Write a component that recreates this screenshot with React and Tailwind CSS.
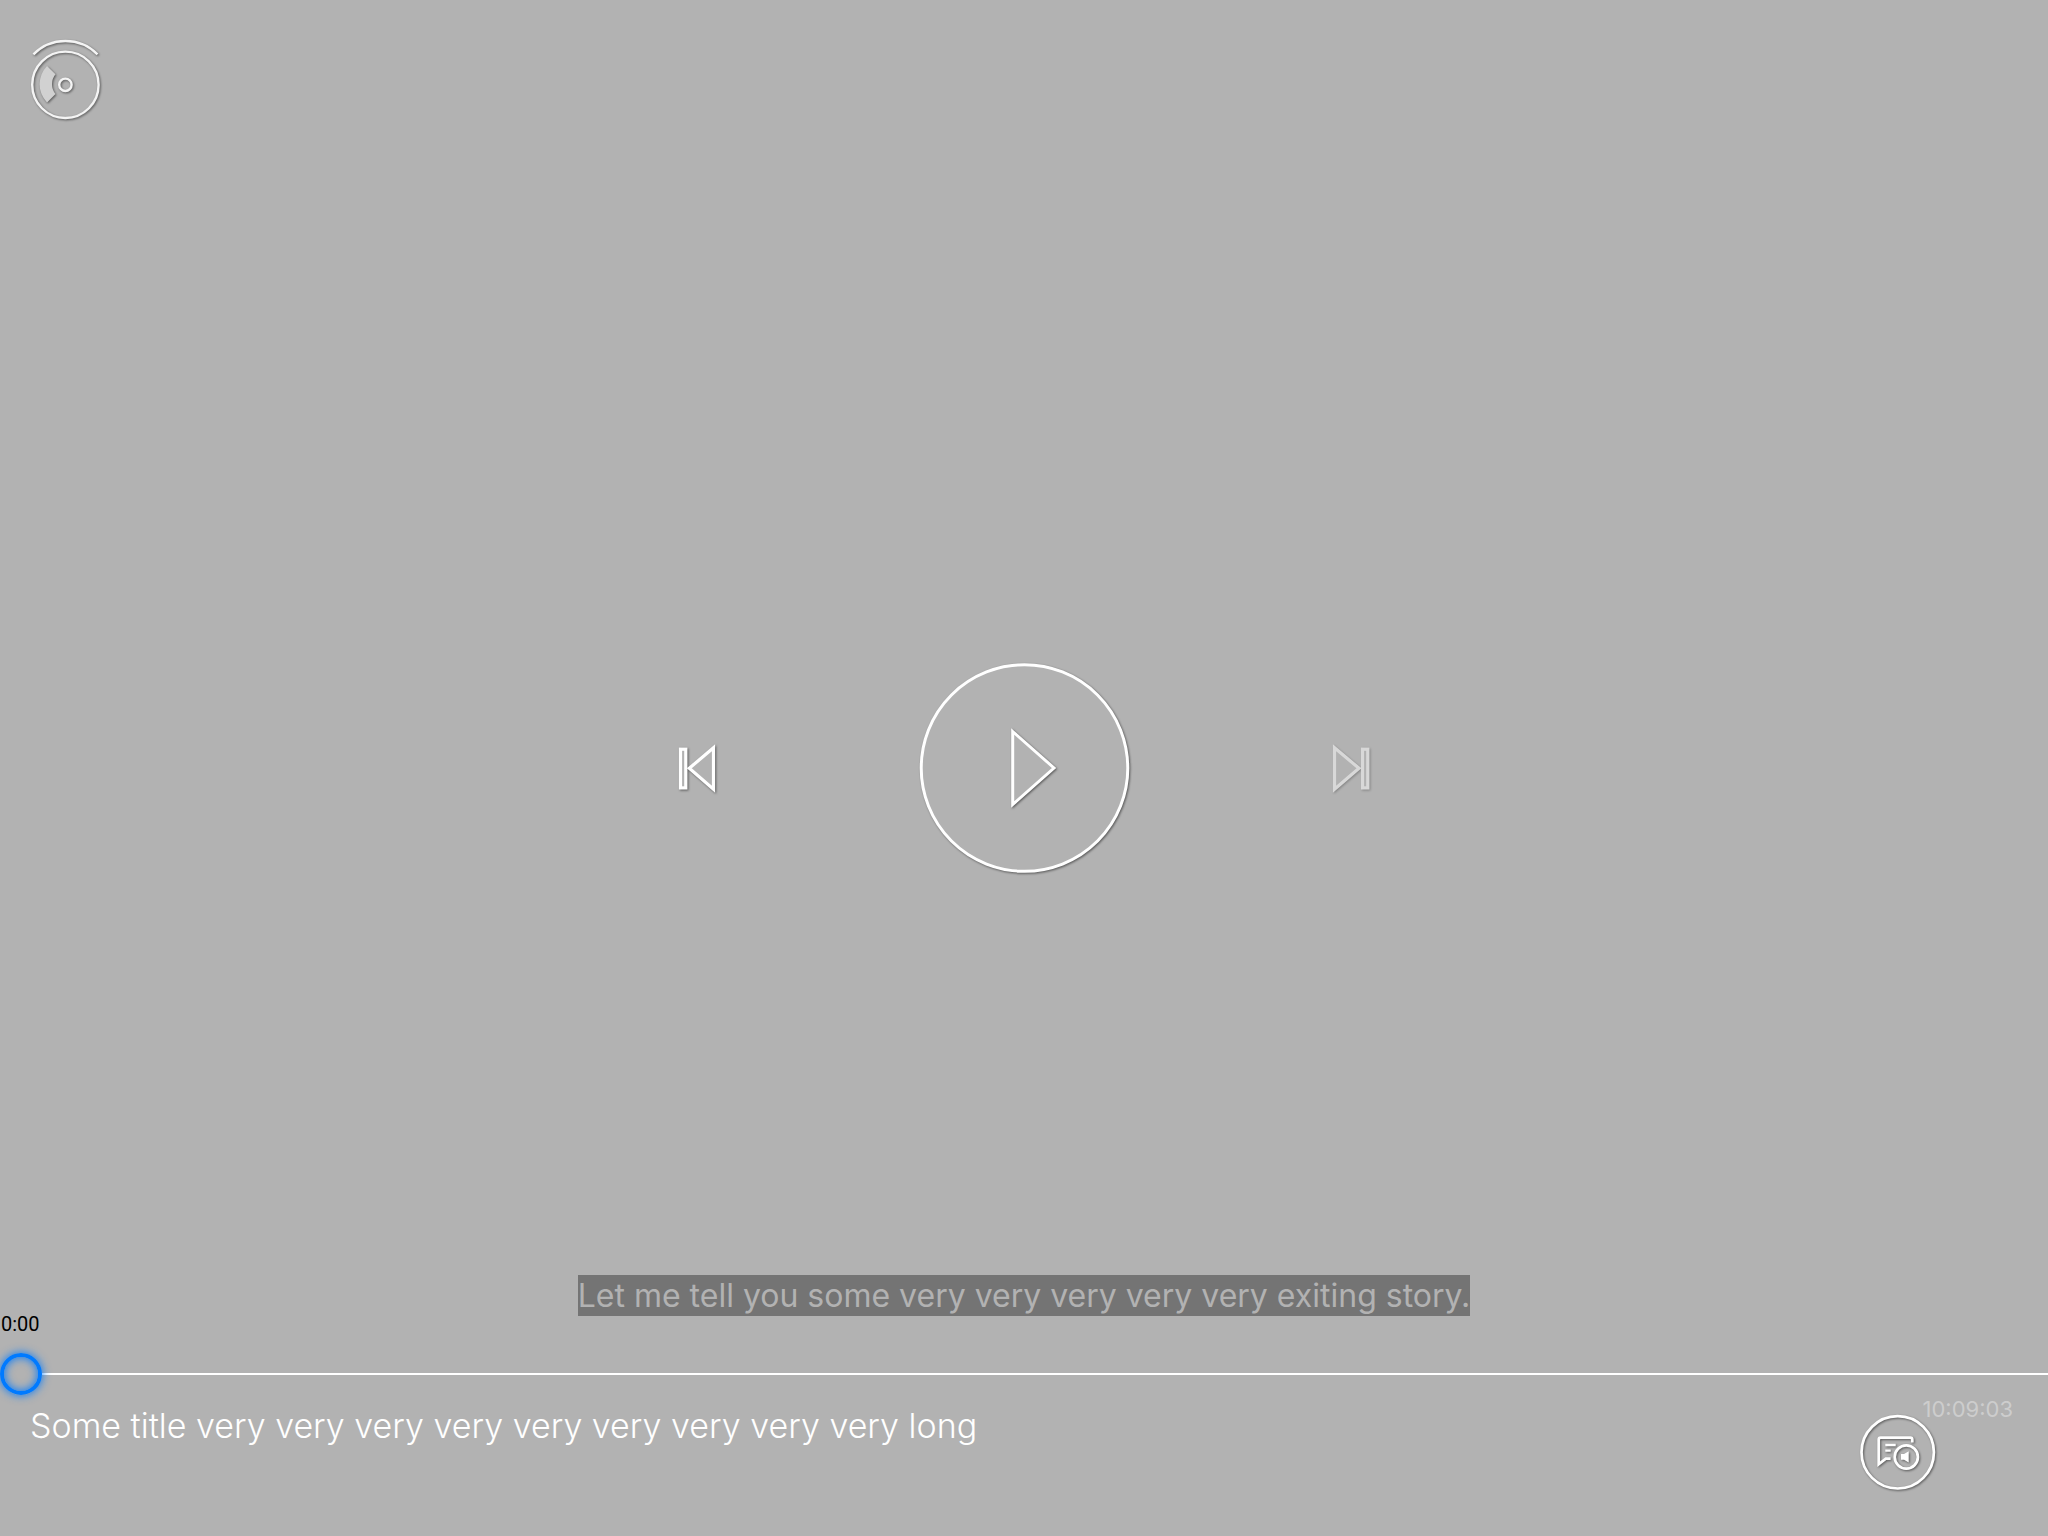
import { useState } from "react";

const shadow = "drop-shadow-[1px_1px_1px_rgba(0,0,0,0.5)]";

function DiscIcon() {
  return (
    <svg width="100" height="100" viewBox="0 0 100 100" fill="none" stroke="#f4f4f4" strokeWidth="2.4" className={shadow} aria-hidden="true">
      <path d="M13.4 24.3A45.1 45.1 0 0 1 77.5 24.3" />
      <circle cx="45.4" cy="54.8" r="33.2" />
      <circle cx="45.4" cy="54.8" r="6.2" />
      <path d="M27 36L35.5 44.3A15.5 15.5 0 0 0 35.5 64L27 72.5A26.2 26.2 0 0 1 27 36Z" fill="#d1d1d1" stroke="none" />
    </svg>
  );
}

function PreviousIcon() {
  return (
    <svg width="80" height="80" viewBox="0 0 80 80" fill="#b2b2b2" stroke="white" strokeWidth="3.2" className={shadow} aria-hidden="true">
      <rect x="21.5" y="21.2" width="5.3" height="38.7" />
      <path d="M30.3 40.3L54.5 19.7V61.2Z" />
    </svg>
  );
}

function NextIcon() {
  return (
    <svg width="80" height="80" viewBox="0 0 80 80" fill="#b2b2b2" stroke="white" strokeWidth="3.2" className={shadow} aria-hidden="true">
      <path d="M50 40.3L25.5 19.7V61.2Z" />
      <rect x="53.5" y="21.2" width="5.3" height="38.7" />
    </svg>
  );
}

function PlayIcon() {
  return (
    <svg width="230" height="230" viewBox="0 0 230 230" fill="#b2b2b2" stroke="white" strokeWidth="3" aria-hidden="true">
      <circle cx="115.5" cy="115" r="103.3" className={shadow} />
      <path d="M103.7 78.5L145 115L103.7 151.5Z" className={shadow} />
    </svg>
  );
}

function TracksIcon() {
  return (
    <svg width="80" height="80" viewBox="0 0 80 80" fill="none" stroke="white" strokeWidth="2.7" className={shadow} aria-hidden="true">
      <circle cx="39.7" cy="40.3" r="36.2" />
      <path d="M54.3 30.5V27.7Q54.3 25.7 52.3 25.7H22.7Q20.7 25.7 20.7 27.7V52.2L27.8 46.7H32.6" />
      <path d="M27.3 33H37.7M27.3 38.7H32.7" strokeWidth="2.3" />
      <circle cx="48.3" cy="45" r="11.6" />
      <path d="M43 42H46L50.7 39.2V50.4L46 47.8H43Z" fill="white" stroke="none" />
    </svg>
  );
}

export default function App() {
  const [position, setPosition] = useState(0);
  return (
    <main className="grid min-h-screen grid-rows-[1fr_auto_1fr] overflow-hidden bg-[#b2b2b2] font-['Inter',sans-serif] text-white">
      <header className="px-5 pt-[30px]">
        <button type="button" aria-label="Disc">
          <DiscIcon />
        </button>
      </header>

      <section className="flex items-center justify-center gap-[170px]">
        <button type="button" aria-label="Previous">
          <PreviousIcon />
        </button>
        <button type="button" aria-label="Play">
          <PlayIcon />
        </button>
        <button type="button" aria-label="Next" disabled className="opacity-50">
          <NextIcon />
        </button>
      </section>

      <footer className="flex flex-col justify-end">
        <p className="self-center bg-[#747474] text-[32px] leading-[41px] text-[#b2b2b2]">
          Let me tell you some very very very very very exiting story.
        </p>
        <label htmlFor="seek" className="pl-px font-['Roboto',sans-serif] text-[20px] leading-4 text-black">
          0:00
        </label>
        <input
          id="seek"
          type="range"
          min="0"
          max="100"
          value={position}
          onChange={(e) => setPosition(Number(e.target.value))}
          className="mt-[21px] block h-[42px] w-full appearance-none bg-[linear-gradient(white,white)] bg-[length:calc(100%-42px)_2px] bg-right bg-no-repeat outline-none [&::-webkit-slider-thumb]:size-[42px] [&::-webkit-slider-thumb]:appearance-none [&::-webkit-slider-thumb]:rounded-full [&::-webkit-slider-thumb]:border-4 [&::-webkit-slider-thumb]:border-[#007aff] [&::-webkit-slider-thumb]:bg-transparent [&::-webkit-slider-thumb]:shadow-[0_0_10px_#007aff,inset_0_0_10px_#007aff]"
        />
        <div className="flex items-start justify-between pb-11 pl-[30px]">
          <h1 className="mt-[9px] text-[34px] leading-[44px] font-light">
            Some title very very very very very very very very very long
          </h1>
          <div className="relative pt-[17px] pr-[110px]">
            <button type="button" aria-label="Audio and subtitles" className="block">
              <TracksIcon />
            </button>
            <time className="absolute top-[2px] right-[35px] text-[22px] leading-[24px] text-[#cdcdcd]">
              10:09:03
            </time>
          </div>
        </div>
      </footer>
    </main>
  );
}
